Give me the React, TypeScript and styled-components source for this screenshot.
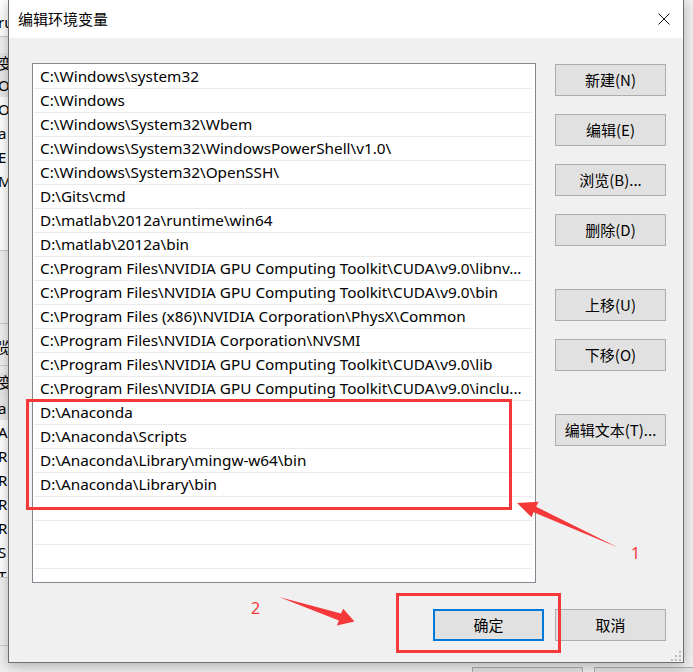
import React from "react";
import styled, { createGlobalStyle } from "styled-components";

const FONT = `"Noto Sans", "Noto Sans CJK SC", sans-serif`;
const RED = "#f5393b";

const GlobalStyle = createGlobalStyle`
  html, body { margin: 0; padding: 0; background: #f0f0f0; }
  body { font-family: ${FONT}; }
  #root { width: 693px; height: 672px; }
`;

const Desktop = styled.div`
  position: relative;
  width: 693px;
  height: 672px;
  overflow: hidden;
  background: #f0f0f0;
  font-family: ${FONT};
`;

/* ---------- background window (only slivers visible) ---------- */
const BgWindow = styled.div`
  display: flex;
  height: 100%;
`;

const BgLeft = styled.div`
  width: 8px;
  flex: none;
  overflow: hidden;
  display: flex;
  flex-direction: column;
`;

const BgCell = styled.div<{ $h: number; $bg?: string; $line?: boolean; $pt?: number; $lh?: number }>`
  height: ${(p) => p.$h}px;
  flex: none;
  box-sizing: border-box;
  overflow: hidden;
  background: ${(p) => p.$bg ?? "transparent"};
  border-bottom: ${(p) => (p.$line ? "1px solid #cdcdcd" : "none")};
  padding-top: ${(p) => p.$pt ?? 0}px;
  font-size: 15px;
  line-height: ${(p) => p.$lh ?? 24}px;
  white-space: nowrap;
  color: #000;
  text-indent: -2px;
`;

const BgCenter = styled.div`
  flex: 1;
  display: flex;
  flex-direction: column;
  justify-content: flex-end;
`;

const BgFooter = styled.div`
  display: flex;
  gap: 11px;
  padding-left: 464px;
  margin-bottom: -27px;
`;

const BgButton = styled.div`
  width: 111px;
  height: 32px;
  box-sizing: border-box;
  border: 1px solid #adadad;
  background: #e1e1e1;
  flex: none;
`;

const BgRight = styled.div`
  width: 9px;
  flex: none;
  display: flex;
  flex-direction: column;
  background: #f0f0f0;
`;

const BgRightCell = styled.div<{ $h: number; $bg?: string; $line?: boolean }>`
  height: ${(p) => p.$h}px;
  flex: none;
  box-sizing: border-box;
  background: ${(p) => p.$bg ?? "transparent"};
  border-bottom: ${(p) => (p.$line ? "1px solid #cdcdcd" : "none")};
  border-left: 2px solid #e4e4e4;
`;

/* ---------- dialog ---------- */
const Dialog = styled.div`
  position: absolute;
  left: 8px;
  top: -1px;
  width: 676px;
  height: 664px;
  box-sizing: border-box;
  border: 1px solid #6f6f6f;
  background: #f0f0f0;
  box-shadow: 0 3px 12px rgba(0, 0, 0, 0.28);
  display: flex;
  flex-direction: column;
`;

const TitleBar = styled.div`
  height: 38px;
  flex: none;
  background: #ffffff;
  display: flex;
  align-items: center;
  justify-content: space-between;
  padding: 0 13px 0 9px;
`;

const Title = styled.div`
  font-family: "Noto Sans CJK SC", ${FONT};
  font-size: 15px;
  line-height: 20px;
  color: #000;
`;

const CloseIcon = styled.svg`
  width: 12px;
  height: 12px;
  display: block;
`;

const Body = styled.div`
  flex: 1;
  display: grid;
  grid-template-columns: 504px 111px;
  grid-template-rows: 520px 32px;
  column-gap: 19px;
  row-gap: 26px;
  padding: 25px 0 0 23px;
`;

const ListBox = styled.div`
  box-sizing: border-box;
  height: 520px;
  border: 1px solid #828790;
  background: #ffffff;
  padding: 1px 3px 1px 1px;
  overflow: hidden;
`;

const Row = styled.div`
  height: 24px;
  box-sizing: border-box;
  border-bottom: 1px solid #ebebeb;
  padding-left: 6px;
  font-size: 15.3px;
  line-height: 23px;
  color: #000;
  white-space: nowrap;
  overflow: hidden;
`;

const ButtonColumn = styled.div`
  display: flex;
  flex-direction: column;
  padding-top: 1px;
`;

const Button = styled.button<{ $space?: number; $default?: boolean }>`
  width: 111px;
  height: 32px;
  flex: none;
  box-sizing: border-box;
  margin: ${(p) => p.$space ?? 0}px 0 0 0;
  padding: 0;
  border: ${(p) => (p.$default ? "2px solid #0078d7" : "1px solid #adadad")};
  background: #e1e1e1;
  font-family: "Noto Sans CJK SC", ${FONT};
  font-size: 15px;
  line-height: 20px;
  color: #000;
  display: flex;
  align-items: center;
  justify-content: center;
`;

const Footer = styled.div`
  grid-column: 1 / span 2;
  display: flex;
  justify-content: flex-end;
  gap: 11px;
`;

const Grip = styled.svg`
  position: absolute;
  right: 1px;
  bottom: 0px;
  width: 12px;
  height: 12px;
`;

/* ---------- annotations ---------- */
const RedBox = styled.div<{ $x: number; $y: number; $w: number; $h: number }>`
  position: absolute;
  left: ${(p) => p.$x}px;
  top: ${(p) => p.$y}px;
  width: ${(p) => p.$w}px;
  height: ${(p) => p.$h}px;
  box-sizing: border-box;
  border: 3px solid ${RED};
  pointer-events: none;
`;

const ArrowLayer = styled.svg`
  position: absolute;
  left: 0;
  top: 0;
  width: 693px;
  height: 672px;
  pointer-events: none;
`;

const Label = styled.span<{ $x: number; $y: number }>`
  position: absolute;
  left: ${(p) => p.$x}px;
  top: ${(p) => p.$y}px;
  font-family: "Noto Sans", sans-serif;
  font-size: 16px;
  line-height: 16px;
  color: ${RED};
`;

const paths = [
  "C:\\Windows\\system32",
  "C:\\Windows",
  "C:\\Windows\\System32\\Wbem",
  "C:\\Windows\\System32\\WindowsPowerShell\\v1.0\\",
  "C:\\Windows\\System32\\OpenSSH\\",
  "D:\\Gits\\cmd",
  "D:\\matlab\\2012a\\runtime\\win64",
  "D:\\matlab\\2012a\\bin",
  "C:\\Program Files\\NVIDIA GPU Computing Toolkit\\CUDA\\v9.0\\libnv...",
  "C:\\Program Files\\NVIDIA GPU Computing Toolkit\\CUDA\\v9.0\\bin",
  "C:\\Program Files (x86)\\NVIDIA Corporation\\PhysX\\Common",
  "C:\\Program Files\\NVIDIA Corporation\\NVSMI",
  "C:\\Program Files\\NVIDIA GPU Computing Toolkit\\CUDA\\v9.0\\lib",
  "C:\\Program Files\\NVIDIA GPU Computing Toolkit\\CUDA\\v9.0\\inclu...",
  "D:\\Anaconda",
  "D:\\Anaconda\\Scripts",
  "D:\\Anaconda\\Library\\mingw-w64\\bin",
  "D:\\Anaconda\\Library\\bin",
  "",
  "",
  "",
  "",
];

const sideButtons: { label: string; space: number }[] = [
  { label: "新建(N)", space: 0 },
  { label: "编辑(E)", space: 18 },
  { label: "浏览(B)...", space: 18 },
  { label: "删除(D)", space: 18 },
  { label: "上移(U)", space: 43 },
  { label: "下移(O)", space: 18 },
  { label: "编辑文本(T)...", space: 43 },
];

type Cell = { h: number; bg?: string; line?: boolean; pt?: number; lh?: number; t?: string };

const leftCells: Cell[] = [
  { h: 37, bg: "#fff", line: true, pt: 10, t: "ru" },
  { h: 16 },
  { h: 20, bg: "#e6e6e6", lh: 20, t: "变" },
  { h: 24, bg: "#e9e9e9", t: "Or" },
  { h: 24, bg: "#fff", t: "Or" },
  { h: 24, bg: "#fff", t: "a" },
  { h: 24, bg: "#fff", t: "E" },
  { h: 24, bg: "#fff", t: "M" },
  { h: 58, bg: "#fff", line: true },
  { h: 73, line: true },
  { h: 42, line: true, pt: 11, t: "览" },
  { h: 7 },
  { h: 23, bg: "#e6e6e6", lh: 18, t: "变" },
  { h: 24, bg: "#e9e9e9", t: "a" },
  { h: 24, bg: "#fff", t: "A" },
  { h: 24, bg: "#fff", t: "R" },
  { h: 24, bg: "#fff", t: "R" },
  { h: 24, bg: "#fff", t: "R" },
  { h: 24, bg: "#fff", t: "R" },
  { h: 24, bg: "#fff", t: "S" },
  { h: 14, bg: "#fff", line: true, t: "T" },
  { h: 68, line: true },
];

const rightCells: { h: number; bg?: string; line?: boolean }[] = [
  { h: 44, bg: "#f7f7f7", line: true },
  { h: 4 },
  { h: 25, bg: "#dcdcdc" },
  { h: 196, bg: "#f3f3f3" },
  { h: 32, bg: "#e4e4e4", line: true },
  { h: 23, bg: "#e6e6e6", line: true },
  { h: 22, bg: "#e4e4e4", line: true },
  { h: 66, bg: "#f3f3f3" },
  { h: 33, bg: "#dcdcdc" },
  { h: 158, bg: "#f3f3f3", line: true },
];

export default function App() {
  return (
    <Desktop>
      <GlobalStyle />
      <BgWindow>
        <BgLeft>
          {leftCells.map((c, i) => (
            <BgCell key={i} $h={c.h} $bg={c.bg} $line={c.line} $pt={c.pt} $lh={c.lh}>
              {c.t}
            </BgCell>
          ))}
        </BgLeft>
        <BgCenter>
          <BgFooter>
            <BgButton />
            <BgButton />
          </BgFooter>
        </BgCenter>
        <BgRight>
          {rightCells.map((c, i) => (
            <BgRightCell key={i} $h={c.h} $bg={c.bg} $line={c.line} />
          ))}
        </BgRight>
      </BgWindow>

      <Dialog>
        <TitleBar>
          <Title>编辑环境变量</Title>
          <CloseIcon viewBox="0 0 12 12">
            <path d="M0.5 0.5 L11.5 11.5 M11.5 0.5 L0.5 11.5" stroke="#111" strokeWidth="1" fill="none" />
          </CloseIcon>
        </TitleBar>
        <Body>
          <ListBox>
            {paths.map((p, i) => (
              <Row key={i}>{p}</Row>
            ))}
          </ListBox>
          <ButtonColumn>
            {sideButtons.map((b) => (
              <Button key={b.label} $space={b.space}>
                {b.label}
              </Button>
            ))}
          </ButtonColumn>
          <Footer>
            <Button $default>确定</Button>
            <Button>取消</Button>
          </Footer>
        </Body>
        <Grip viewBox="0 0 12 12">
          <g fill="#bcbcbc">
            <rect x="9" y="1" width="2" height="2" />
            <rect x="5" y="5" width="2" height="2" />
            <rect x="9" y="5" width="2" height="2" />
            <rect x="1" y="9" width="2" height="2" />
            <rect x="5" y="9" width="2" height="2" />
            <rect x="9" y="9" width="2" height="2" />
          </g>
        </Grip>
      </Dialog>

      <RedBox $x={26} $y={399} $w={486} $h={111} />
      <RedBox $x={396} $y={593} $w={165} $h={60} />
      <ArrowLayer viewBox="0 0 693 672">
        <polygon
          fill={RED}
          points="517,503 538.5,501.8 536.2,506.8 618,547.5 533.6,512.2 531.5,517.2"
        />
        <polygon
          fill={RED}
          points="354.5,621.5 343.2,608.8 341,613.6 279,597 338.9,620.4 336.8,625.4"
        />
      </ArrowLayer>
      <Label $x={631} $y={545}>1</Label>
      <Label $x={251} $y={600}>2</Label>
    </Desktop>
  );
}
